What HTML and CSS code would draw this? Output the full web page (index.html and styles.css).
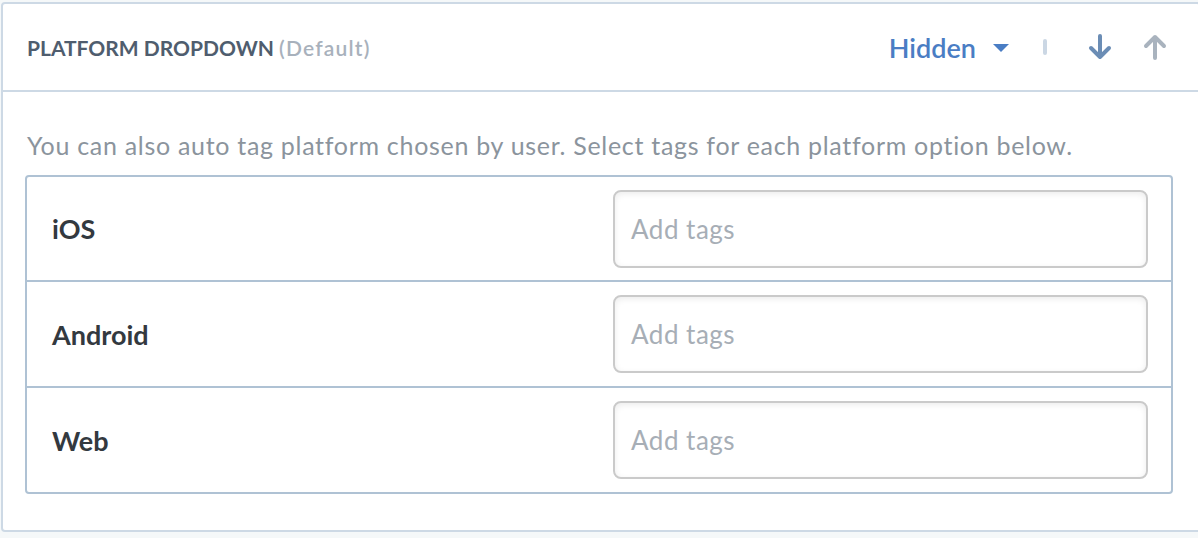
FILE: index.html
```html
<!DOCTYPE html>
<html>
<head>
<meta charset="utf-8">
<link rel="stylesheet" href="styles.css">
</head>
<body>
<div class="card">
  <div class="card-header">
    <div class="title">PLATFORM DROPDOWN <span class="title-note">(Default)</span></div>
    <div class="actions">
      <span class="visibility">Hidden</span>
      <svg class="caret" width="16" height="8" viewBox="0 0 16 8"><path d="M0 0 H16 L8 8 Z" fill="#4a7dc4"/></svg>
      <span class="divider"></span>
      <svg class="arrow arrow-down" width="26" height="26" viewBox="0 0 26 26"><path d="M13 2 V23 M4 14 L13 23 L22 14" fill="none" stroke="#6b8db5" stroke-width="4" stroke-linecap="round" stroke-linejoin="round"/></svg>
      <svg class="arrow arrow-up" width="26" height="26" viewBox="0 0 26 26"><path d="M13 24 V3 M4 12 L13 3 L22 12" fill="none" stroke="#a9b3be" stroke-width="4" stroke-linecap="round" stroke-linejoin="round"/></svg>
    </div>
  </div>
  <div class="card-body">
    <p class="desc">You can also auto tag platform chosen by user. Select tags for each platform option below.</p>
    <div class="platforms">
      <div class="row">
        <div class="label">iOS</div>
        <div class="tag-input">Add tags</div>
      </div>
      <div class="row">
        <div class="label">Android</div>
        <div class="tag-input">Add tags</div>
      </div>
      <div class="row">
        <div class="label">Web</div>
        <div class="tag-input">Add tags</div>
      </div>
    </div>
  </div>
</div>
</body>
</html>
```

FILE: styles.css
```css
html, body {
  margin: 0;
  padding: 0;
  background: #f5f8f9;
  overflow: hidden;
  font-family: Lato, "Open Sans", sans-serif;
}

.card {
  margin: 2px 0 0 1px;
  width: 1196px;
  background: #fff;
  border: 2px solid #cdd9e5;
  border-radius: 4px;
  padding-bottom: 36px;
}

.card-header {
  display: flex;
  align-items: center;
  justify-content: space-between;
  height: 86px;
  padding: 0 31px 0 24px;
  border-bottom: 2px solid #cdd9e5;
}

.title {
  font-size: 21px;
  font-weight: 700;
  color: #4f5d6e;
}

.title-note {
  font-weight: 600;
  letter-spacing: 1.2px;
  color: #a8b1bc;
}

.actions {
  display: flex;
  align-items: center;
}

.visibility {
  font-size: 27px;
  font-weight: 600;
  color: #4a7dc4;
}

.caret {
  margin-left: 17px;
  margin-top: 2px;
}

.divider {
  width: 4px;
  height: 16px;
  border-radius: 2px;
  background: #cbd7e4;
  margin-left: 34px;
}

.arrow-down {
  margin-left: 40px;
}

.arrow-up {
  margin-left: 29px;
}

.card-body {
  padding: 0 26px 0 22px;
}

.desc {
  margin: 38px 0 15px 2px;
  font-size: 25px;
  line-height: 30px;
  letter-spacing: 0.7px;
  color: #8b949d;
}

.platforms {
  border: 2px solid #afc2d4;
  border-radius: 4px;
}

.row {
  display: flex;
  align-items: center;
  justify-content: space-between;
  height: 104px;
  padding: 0 23px 0 25px;
  border-top: 2px solid #afc2d4;
}

.row:first-child {
  border-top: none;
  height: 103px;
}

.label {
  font-size: 27px;
  font-weight: 700;
  color: #33393f;
}

.tag-input {
  box-sizing: border-box;
  width: 535px;
  height: 78px;
  border: 2px solid #cacaca;
  border-radius: 8px;
  box-shadow: inset 0 2px 6px rgba(0, 0, 0, 0.08);
  padding: 0 16px;
  display: flex;
  align-items: center;
  font-size: 26px;
  letter-spacing: 0.5px;
  color: #a7aeb6;
}
```
